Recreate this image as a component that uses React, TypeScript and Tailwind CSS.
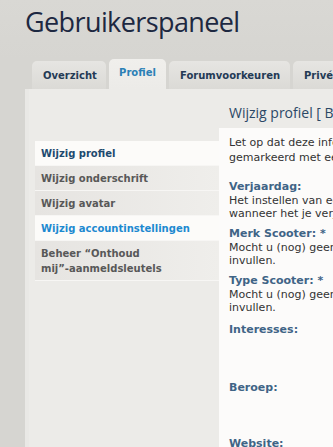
import React from 'react';

const tabs = [
  { label: 'Overzicht', w: 'w-[74px]' },
  { label: 'Profiel', w: 'w-[57px]', active: true },
  { label: 'Forumvoorkeuren', w: 'w-[121px]' },
  { label: 'Privéberichten', w: 'w-[110px]' },
];

const menu: { label: React.ReactNode; key: string; state?: string }[] = [
  { key: 'profiel', label: 'Wijzig profiel', state: 'current' },
  { key: 'onderschrift', label: 'Wijzig onderschrift' },
  { key: 'avatar', label: 'Wijzig avatar' },
  { key: 'account', label: 'Wijzig accountinstellingen', state: 'hover' },
  {
    key: 'sleutels',
    label: (
      <>
        Beheer “Onthoud
        <br />
        mij”-aanmeldsleutels
      </>
    ),
  },
];

const Field = ({ label, lines, gap }: { label: string; lines?: string[]; gap: string }) => (
  <div className={gap}>
    <div className="font-bold text-[#3f6486] leading-[14px]">{label}</div>
    {lines &&
      lines.map((l) => (
        <div key={l} className="whitespace-nowrap leading-[13px]">
          {l}
        </div>
      ))}
  </div>
);

export default function App() {
  return (
    <div className="w-[333px] h-[447px] overflow-hidden bg-[#d6d5d1] flex flex-col font-['DejaVu_Sans',Verdana,sans-serif]">
      {/* header */}
      <div className="shrink-0 pl-[25px] pt-[4px] h-[60px] bg-gradient-to-b from-[#d9d8d4] to-[#d6d5d1]">
        <h1 className="font-['Open_Sans',sans-serif] text-[27px] leading-[36px] tracking-[-0.6px] text-[#1d2841]">
          Gebruikerspaneel
        </h1>
      </div>

      {/* tabs */}
      <div className="shrink-0 flex items-end gap-[3px] pl-[32px] h-[29px]">
        {tabs.map((t) => (
          <div
            key={t.label}
            className={`${t.w} shrink-0 rounded-t-[5px] flex items-center text-[10px] font-bold ${
              t.active
                ? 'h-[30px] justify-center bg-gradient-to-b from-[#f0efec] to-[#ecebe8] text-[#2b80b6] pb-[3px]'
                : 'h-[28px] justify-start pl-[11px] bg-gradient-to-b from-[#e6e5e2] to-[#dbdad6] text-[#243a55]'
            }`}
          >
            {t.label}
          </div>
        ))}
      </div>

      {/* panel */}
      <div className="ml-[25px] flex-1 min-h-0 bg-[#ecebe8] border-l-[4px] border-[#e9e8e5] flex pl-[6px] text-[#333]">
        <div className="w-[184px] shrink-0 pt-[52px] text-[10px]">
          <ul className="flex flex-col">
            {menu.map((m) => (
              <li
                key={m.key}
                className={`pl-[6px] pr-[4px] pt-[5px] pb-[4px] border-b border-[#f7f6f4] font-bold leading-[15px] ${
                  m.state === 'current'
                    ? 'bg-[#fcfbf9] text-[#1d4a6f]'
                    : m.state === 'hover'
                    ? 'bg-[#fcfbf9] text-[#1c89d0]'
                    : 'bg-gradient-to-r from-[#e6e4e1] to-[#efeeeb] text-[#585858]'
                }`}
              >
                {m.label}
              </li>
            ))}
          </ul>
        </div>

        <div className="flex-1 flex flex-col min-w-0">
          <h2 className="shrink-0 pl-[10px] pt-[14px] h-[39px] font-['Open_Sans',sans-serif] text-[14px] leading-[20px] text-[#2b4866] whitespace-nowrap">
            Wijzig profiel [ Bekijk profiel ]
          </h2>
          <div className="flex-1 bg-[#fcfbfa] pl-[10px] pt-[7px] w-[500px] text-[11px]">
            <div className="leading-[15px] whitespace-nowrap">
              <div>Let op dat deze informatie openbaar zichtbaar is. Velden</div>
              <div>gemarkeerd met een * moeten ingevuld worden.</div>
            </div>
            <Field
              gap="mt-[15px]"
              label="Verjaardag:"
              lines={[
                'Het instellen van een verjaardag zorgt ervoor dat je leeftijd zichtbaar is',
                'wanneer het je verjaardag is.',
              ]}
            />
            <Field
              gap="mt-[7px]"
              label="Merk Scooter: *"
              lines={['Mocht u (nog) geen scooter hebben, dan hoeft u dit niet in te', 'invullen.']}
            />
            <Field
              gap="mt-[7px]"
              label="Type Scooter: *"
              lines={['Mocht u (nog) geen scooter hebben, dan hoeft u dit niet in te', 'invullen.']}
            />
            <Field gap="mt-[9px] h-[58px]" label="Interesses:" />
            <Field gap="h-[56px]" label="Beroep:" />
            <Field gap="" label="Website:" />
          </div>
        </div>
      </div>
    </div>
  );
}
